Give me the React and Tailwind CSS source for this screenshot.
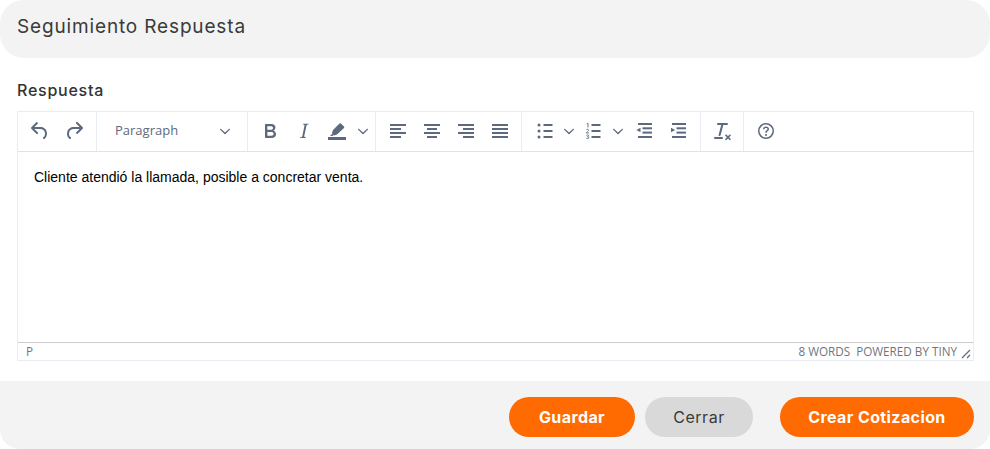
import React from 'react';

const poppins = "font-['Inter',sans-serif]";

const Icon = ({ children, className = '' }) => (
    <svg width="24" height="24" viewBox="0 0 24 24" fill="#5d6a7e" className={className}>
        {children}
    </svg>
);

const Chevron = () => (
    <svg width="10" height="10" viewBox="0 0 10 10" fill="#5d6a7e">
        <path d="M5 6.600 1.100 2.900a.6.6 0 0 0-.9.8l4.300 4.200c.3.3.7.3 1 0l4.300-4.200a.6.6 0 0 0-.9-.8L5 6.600Z" />
    </svg>
);

const Btn = ({ children, className = 'w-[34px]' }) => (
    <div className={`h-[34px] flex items-center justify-center shrink-0 ${className}`}>{children}</div>
);

const Group = ({ children, className = '' }) => (
    <div className={`h-full pb-px flex items-center border-r border-[#e8edf3] shrink-0 ${className}`}>{children}</div>
);

const Lines = ({ rows }) => (
    <Icon>
        {rows.map(([x, y, w]) => (
            <rect key={y} x={x} y={y} width={w} height="2" />
        ))}
    </Icon>
);

const ListLines = () => (
    <>
        <rect x="10.500" y="5" width="9" height="2" />
        <rect x="10.500" y="11" width="9" height="2" />
        <rect x="10.500" y="17" width="9" height="2" />
    </>
);

const IndentLines = () => (
    <>
        <rect x="6" y="4" width="14" height="2" />
        <rect x="10.500" y="8.300" width="9.500" height="2" />
        <rect x="10.500" y="12.600" width="9.500" height="2" />
        <rect x="6" y="17" width="14" height="2" />
    </>
);

const Toolbar = () => (
    <div className="h-10 flex items-center border-b border-[#dfe3e8]">
        <Group className="w-[79px] justify-center">
            <Btn>
                <Icon><path d="M6.400 8H12c3.700 0 6.200 2 6.800 5.100.6 2.700-.4 5.600-2.300 6.800a1 1 0 0 1-1-1.800c1.100-.6 1.800-2.700 1.400-4.600-.5-2.100-2.100-3.500-4.900-3.500H6.400l3.300 3.300a1 1 0 1 1-1.400 1.400l-5-5a1 1 0 0 1 0-1.400l5-5a1 1 0 0 1 1.400 1.400L6.400 8Z" /></Icon>
            </Btn>
            <Btn>
                <Icon><path d="M17.600 10H12c-2.800 0-4.400 1.400-4.900 3.500-.4 2 .3 4 1.400 4.600a1 1 0 1 1-1 1.800c-2-1.200-2.900-4.100-2.300-6.800.6-3 3-5.100 6.800-5.100h5.600l-3.300-3.300a1 1 0 1 1 1.400-1.400l5 5a1 1 0 0 1 0 1.400l-5 5a1 1 0 0 1-1.400-1.400l3.300-3.300Z" /></Icon>
            </Btn>
        </Group>
        <Group className="w-[151px] pl-[18px] pr-[17px] justify-between">
            <span className="font-['Open_Sans',sans-serif] text-[13px] text-[#5d6a7e]">Paragraph</span>
            <Chevron />
        </Group>
        <Group className="w-[128px] pl-[5px]">
            <Btn>
                <Icon><path d="M7.800 19c-.3 0-.5 0-.6-.2l-.2-.5V5.700c0-.2 0-.4.2-.5l.6-.2h5c1.500 0 2.700.3 3.500 1 .7.6 1.100 1.400 1.100 2.500a3 3 0 0 1-.6 1.900c-.4.6-1 1-1.600 1.200.4.1.9.3 1.300.6s.8.7 1 1.200c.4.4.5 1 .5 1.600 0 1.300-.4 2.300-1.300 3-.8.7-2.100 1-3.800 1H7.800Zm5-8.300c.6 0 1.200-.1 1.600-.5.4-.3.6-.7.6-1.300 0-1.100-.8-1.700-2.300-1.700H9.300v3.500h3.400Zm.5 6c.7 0 1.300-.1 1.700-.4.4-.4.6-.9.6-1.500s-.2-1-.7-1.400c-.4-.3-1-.4-2-.4H9.400v3.800h4Z" /></Icon>
            </Btn>
            <Btn>
                <Icon><path d="M16.700 4.700l-.1.9h-.3c-.6 0-1 0-1.400.3-.3.3-.4.6-.5 1.100l-2.100 9.800v.6c0 .5.4.8 1.400.8h.2l-.2.8H8l.2-.8h.2c1.100 0 1.800-.5 2-1.500l2-9.800.1-.5c0-.6-.4-.8-1.400-.8h-.3l.2-.9h5.800Z" /></Icon>
            </Btn>
            <Btn className="w-[32px]">
                <Icon>
                    <path d="M3 18h18v3H3z" />
                    <path d="M5 17l2.500-2.500-.5-.5 1-3 6.500-6.500a1 1 0 0 1 1.400 0l3.100 3.100a1 1 0 0 1 0 1.400L12 15.500l-3 1-.5-.5-1 1z" />
                </Icon>
            </Btn>
            <Btn className="w-[20px]"><Chevron /></Btn>
        </Group>
        <Group className="w-[146px] justify-center">
            <Btn><Lines rows={[[4, 5, 16], [4, 9, 11], [4, 13, 16], [4, 17, 11]]} /></Btn>
            <Btn><Lines rows={[[4, 5, 16], [7, 9, 10], [4, 13, 16], [7, 17, 10]]} /></Btn>
            <Btn><Lines rows={[[4, 5, 16], [9, 9, 11], [4, 13, 16], [9, 17, 11]]} /></Btn>
            <Btn><Lines rows={[[4, 5, 16], [4, 9, 16], [4, 13, 16], [4, 17, 16]]} /></Btn>
        </Group>
        <Group className="w-[179px] pl-[6px]">
            <Btn>
                <Icon>
                    <ListLines />
                    <circle cx="6" cy="6" r="1.500" /><circle cx="6" cy="12" r="1.500" /><circle cx="6" cy="18" r="1.500" />
                </Icon>
            </Btn>
            <Btn className="w-[14px]"><Chevron /></Btn>
            <Btn>
                <Icon>
                    <ListLines />
                    <g fill="none" stroke="#5d6a7e" strokeWidth="0.900">
                        <path d="M5.800 5 7 4.300v4.200" />
                        <path d="M5.300 11c.2-1 2.400-1 2.400.2 0 .9-2.400 1.800-2.400 2.800h2.600" />
                        <path d="M5.300 16.500c.4-.8 2.400-.8 2.400.3 0 .6-.6.9-1.200.9.7 0 1.300.3 1.300 1 0 1.100-2.100 1.200-2.600.3" />
                    </g>
                </Icon>
            </Btn>
            <Btn className="w-[16px]"><Chevron /></Btn>
            <Btn className="ml-[1px] w-[34px]">
                <Icon>
                    <IndentLines />
                    <path d="M8.500 8.700v4.600L4.300 11l4.200-2.300Z" />
                </Icon>
            </Btn>
            <Btn>
                <Icon>
                    <IndentLines />
                    <path d="M5 8.700v4.600L9.200 11 5 8.700Z" />
                </Icon>
            </Btn>
        </Group>
        <Group className="w-[43px] justify-center">
            <Btn>
                <Icon>
                    <path d="M13.200 6a1 1 0 0 1 0 .2l-2.600 10a1 1 0 0 1-1 .8h-.2a.8.8 0 0 1-.8-1l2.600-10H8a1 1 0 1 1 0-2h9a1 1 0 0 1 0 2h-3.800ZM5 18h7a1 1 0 0 1 0 2H5a1 1 0 0 1 0-2Zm13 1.400-1.600 1.600a.8.8 0 0 1-1.100-1.100l1.600-1.600-1.600-1.600a.8.8 0 0 1 1.100-1.100l1.600 1.600 1.600-1.600a.8.8 0 0 1 1.100 1.100l-1.600 1.600 1.600 1.600a.8.8 0 0 1-1.100 1.100L18 19.400Z" />
                </Icon>
            </Btn>
        </Group>
        <div className="w-[43px] h-full pb-px flex items-center justify-center">
            <Btn>
                <Icon>
                    <path fillRule="evenodd" d="M12 4a8 8 0 1 1 0 16 8 8 0 0 1 0-16Zm0 1.500a6.500 6.500 0 1 0 0 13 6.500 6.500 0 0 0 0-13Z" />
                    <path d="M12 7.500c1.700 0 3 1.100 3 2.600 0 1.100-.6 1.700-1.300 2.200-.6.4-.9.700-.9 1.200v.3h-1.500v-.4c0-1.100.6-1.700 1.300-2.200.6-.4.9-.7.9-1.100 0-.7-.6-1.100-1.500-1.100s-1.500.5-1.500 1.200H9c0-1.600 1.300-2.700 3-2.700Z" />
                    <circle cx="12" cy="16" r="1" />
                </Icon>
            </Btn>
        </div>
    </div>
);

const App = () => {
    return (
        <div className="w-[990px] h-[449px] bg-white flex flex-col overflow-hidden">
            <div className="h-[58px] bg-[#f3f3f3] rounded-[24px] flex items-center px-[17px] pb-1">
                <h2 className={`${poppins} text-[19px] text-[#3a3a3a] tracking-[0.85px] font-normal`}>Seguimiento Respuesta</h2>
            </div>

            <div className="px-[17px] pt-[21px]">
                <label className={`${poppins} block text-[16px] leading-[22px] font-medium text-[#333] tracking-[0.75px] mb-[10px]`}>Respuesta</label>

                <div className="w-[957px] h-[250px] border border-[#e8edf3] flex flex-col">
                    <Toolbar />
                    <div className="flex-1 px-[16px] pt-[16px] font-['Liberation_Sans',sans-serif] text-[14px] leading-[19px] text-black">
                        Cliente atendió la llamada, posible a concretar venta.
                    </div>
                    <div className="h-[18px] border-t border-[#cccccc] flex items-center pl-[8px] pr-[1px] font-['Open_Sans',sans-serif] text-[11.7px] text-[#70757c]">
                        <span>P</span>
                        <span className="ml-auto">8 WORDS</span>
                        <span className="ml-[6px]">POWERED BY TINY</span>
                        <svg width="12" height="12" viewBox="0 0 12 12" fill="none" stroke="#5d6a7e" strokeWidth="1.200" className="ml-[3px] mt-[4px]">
                            <path d="M2 10 10 2M7 10l3-3" />
                        </svg>
                    </div>
                </div>
            </div>

            <div className="mt-[20px] flex-1 bg-[#f3f3f3] rounded-b-[20px] flex items-start pt-[16px] pl-[509px]">
                <button className={`${poppins} w-[126px] h-10 rounded-[20px] bg-[#ff6b00] text-white text-[16px] tracking-[0.4px] font-bold`}>Guardar</button>
                <button className={`${poppins} w-[108px] h-10 ml-[10px] rounded-[20px] bg-[#d9d9d9] text-[#3a3a3a] text-[16px] tracking-[0.5px]`}>Cerrar</button>
                <button className={`${poppins} w-[194px] h-10 ml-[27px] rounded-[20px] bg-[#ff6b00] text-white text-[16px] tracking-[0.4px] font-bold`}>Crear Cotizacion</button>
            </div>
        </div>
    );
};

export default App;
